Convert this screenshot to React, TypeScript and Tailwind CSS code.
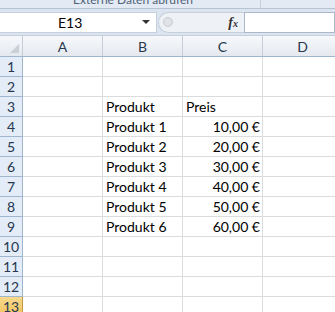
import React from 'react';

const rows: Record<number, [string, string]> = {
  3: ['Produkt', 'Preis'],
  4: ['Produkt 1', '10,00 €'],
  5: ['Produkt 2', '20,00 €'],
  6: ['Produkt 3', '30,00 €'],
  7: ['Produkt 4', '40,00 €'],
  8: ['Produkt 5', '50,00 €'],
  9: ['Produkt 6', '60,00 €'],
};

const cols = ['A', 'B', 'C', 'D'];

export default function App() {
  return (
    <div className="w-[335px] h-[312px] overflow-hidden bg-white font-['Lato',_'Liberation_Sans',_sans-serif] text-[14px] text-black">
      {/* ribbon remnant */}
      <div className="flex h-[9px] border-b border-[#b6c3d4] bg-[#e3eaf3] overflow-hidden">
        <div className="relative w-[261px] border-r border-[#c3cfdd]">
          <span className="absolute left-[73px] top-[-9px] text-[12px] text-[#51627a]">Externe Daten abrufen</span>
        </div>
        <div className="flex-1"></div>
      </div>

      {/* formula bar */}
      <div className="flex h-[27px] items-center bg-[#dbe4ef] border-b border-[#c5cfdb]">
        <div className="flex h-[21px] w-[157px] items-center bg-white border-y border-r border-[#c5d0de]">
          <span className="ml-[58px] text-[14px] text-black">E13</span>
          <span className="ml-auto mr-[6px] w-0 h-0 border-x-[4px] border-x-transparent border-t-[4px] border-t-[#333]"></span>
        </div>
        <div className="flex h-[21px] w-[86px] items-center rounded-l-full bg-[#eef1f5] border-y border-l border-[#c5cfdb] ml-[1px]">
          <span className="ml-[4px] w-[10px] h-[10px] rounded-full bg-[#dfe3e8] border border-[#c8cdd4]"></span>
          <span className="ml-auto mr-[6px] font-['Liberation_Serif',_serif] italic text-[14px] text-[#333] font-bold">f<span className="text-[10px]">x</span></span>
        </div>
        <div className="flex-1 h-[21px] bg-white border border-[#a9b8ca]"></div>
      </div>

      {/* column header */}
      <div className="flex h-[21px] bg-gradient-to-b from-[#f6f8fb] to-[#e5e9ef] border-b border-[#9eb6ce] text-[#27384f]">
        <div className="relative w-[23px] shrink-0 border-r border-[#c5cdd8]">
          <span className="absolute right-[3px] bottom-[3px] w-0 h-0 border-l-[9px] border-l-transparent border-b-[9px] border-b-[#c9cfd7]"></span>
        </div>
        {cols.map((c) => (
          <div key={c} className="flex w-[80px] shrink-0 items-center justify-center border-r border-[#c5cdd8]">
            {c}
          </div>
        ))}
      </div>

      {/* rows */}
      {Array.from({ length: 13 }, (_, i) => i + 1).map((r) => {
        const data = rows[r];
        const selected = r === 13;
        return (
          <div key={r} className="flex h-[20px]">
            <div
              className={
                selected
                  ? 'flex w-[23px] shrink-0 items-center justify-center bg-gradient-to-b from-[#f8d98c] to-[#f1c15e] border-r border-b border-[#c29a43] text-[#27384f]'
                  : 'flex w-[23px] shrink-0 items-center justify-center bg-[#e4ecf7] border-r border-b border-[#9eb6ce] text-[#27384f]'
              }
            >
              {r}
            </div>
            <div className="w-[80px] shrink-0 border-r border-b border-[#dadcdd]"></div>
            <div className="flex w-[80px] shrink-0 items-end pl-[3px] pb-[1px] border-r border-b border-[#dadcdd] leading-[17px]">
              {data ? data[0] : ''}
            </div>
            <div
              className={
                r === 3
                  ? 'flex w-[80px] shrink-0 items-end pl-[3px] pb-[1px] border-r border-b border-[#dadcdd] leading-[17px]'
                  : 'flex w-[80px] shrink-0 items-end justify-end pr-[2px] pb-[1px] border-r border-b border-[#dadcdd] leading-[17px]'
              }
            >
              {data ? data[1] : ''}
            </div>
            <div className="w-[80px] shrink-0 border-r border-b border-[#dadcdd]"></div>
          </div>
        );
      })}
    </div>
  );
}
